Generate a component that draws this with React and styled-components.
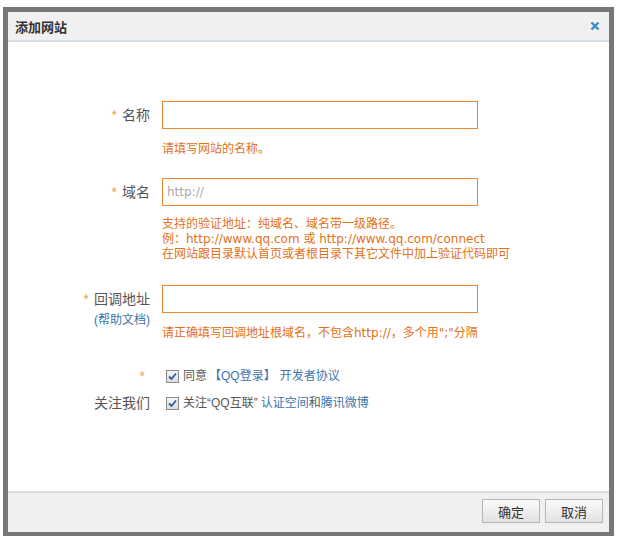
import styled, { createGlobalStyle } from "styled-components";

const GlobalStyle = createGlobalStyle`
  body {
    margin: 0;
    background: #fff;
    font-family: "Liberation Sans", "Noto Sans CJK SC", sans-serif;
  }
`;

const Dialog = styled.div`
  margin: 7px 0 0 3px;
  width: 611px;
  height: 530px;
  box-sizing: border-box;
  border: 5px solid #777;
  display: flex;
  flex-direction: column;
  background: #fff;
`;

const Header = styled.div`
  height: 28px;
  border-bottom: 2px solid #d6dee4;
  background: #f0f0f0;
  display: flex;
  align-items: center;
  justify-content: space-between;
  padding: 0 9px 0 7px;
`;

const Title = styled.span`
  font-size: 13px;
  font-weight: 700;
  color: #333;
`;

const Close = styled.button`
  border: 0;
  background: none;
  padding: 0;
  width: 10px;
  height: 10px;
  display: flex;
  cursor: pointer;
`;

const Body = styled.div`
  flex: 1;
  padding-top: 59px;
`;

const Row = styled.div`
  display: flex;
  align-items: flex-start;
  margin-top: ${(p) => p.$top || 0}px;
`;

const Label = styled.div`
  width: 142px;
  flex: none;
  text-align: right;
  font-size: 14px;
  line-height: ${(p) => p.$lh || 28}px;
  color: #555;
`;

const Star = styled.span`
  color: #f0a050;
  margin-right: 5px;
`;

const HelpLink = styled.a`
  display: block;
  font-size: 12px;
  line-height: 18px;
  color: #3b74ad;
  text-decoration: none;
  margin-top: -2px;
`;

const Control = styled.div`
  margin-left: 12px;
  display: flex;
  flex-direction: column;
`;

const Input = styled.input`
  width: 316px;
  height: 28px;
  box-sizing: border-box;
  border: 1px solid #e78a33;
  padding: 0 4px;
  font-family: "DejaVu Sans", "Noto Sans CJK SC", sans-serif;
  font-size: 12px;
  color: #333;
  outline: none;

  &::placeholder {
    color: #aaa;
  }
`;

const Hint = styled.div`
  margin-top: ${(p) => p.$top || 12}px;
  font-family: "DejaVu Sans", "Noto Sans CJK SC", sans-serif;
  font-size: 12px;
  line-height: 15px;
  color: #e3711a;
  white-space: nowrap;
`;

const CheckLine = styled.label`
  display: flex;
  align-items: center;
  padding-left: 4px;
  font-size: 12px;
  line-height: 18px;
  color: #555;
`;

const Box = styled.span`
  width: 11px;
  height: 11px;
  border: 1px solid #8a8a8a;
  background: linear-gradient(#f4f4f4, #dcdcdc);
  display: flex;
  align-items: center;
  justify-content: center;
  margin-right: 4px;
`;

const Link = styled.a`
  color: #3b74ad;
  text-decoration: none;
  margin: ${(p) => p.$m || 0};
`;

const Footer = styled.div`
  height: 41px;
  border-top: 2px solid #d6dee4;
  background: #f0f0f0;
  display: flex;
  justify-content: flex-end;
  align-items: flex-start;
  gap: 5px;
  padding: 6px 6px 0 0;
  box-sizing: border-box;
`;

const Button = styled.button`
  width: 58px;
  height: 24px;
  border: 1px solid #b5b5b5;
  background: linear-gradient(#fbfbfb, #e2e2e2);
  font-family: inherit;
  font-size: 13px;
  color: #333;
  padding: 0;
  cursor: pointer;
`;

const Check = () => (
  <Box>
    <svg width="9" height="9" viewBox="0 0 9 9">
      <path d="M1 4.5 L3.5 7 L8 1.5" fill="none" stroke="#2d5ca6" strokeWidth="1.8" />
    </svg>
  </Box>
);

export default function App() {
  return (
    <>
      <GlobalStyle />
      <Dialog>
        <Header>
          <Title>添加网站</Title>
          <Close aria-label="关闭">
            <svg width="10" height="10" viewBox="0 0 10 10">
              <path d="M1.5 1.5 L8.5 8.5 M8.5 1.5 L1.5 8.5" stroke="#3d8cc4" strokeWidth="2.4" />
            </svg>
          </Close>
        </Header>
        <Body>
          <Row>
            <Label>
              <Star>*</Star>名称
            </Label>
            <Control>
              <Input />
              <Hint $top={13}>请填写网站的名称。</Hint>
            </Control>
          </Row>
          <Row $top={21}>
            <Label>
              <Star>*</Star>域名
            </Label>
            <Control>
              <Input placeholder="http://" />
              <Hint $top={11}>
                支持的验证地址：纯域名、域名带一级路径。
                <br />
                例：http://www.qq.com 或 http://www.qq.com/connect
                <br />
                在网站跟目录默认首页或者根目录下其它文件中加上验证代码即可
              </Hint>
            </Control>
          </Row>
          <Row $top={23}>
            <Label>
              <Star>*</Star>回调地址
              <HelpLink href="#">(帮助文档)</HelpLink>
            </Label>
            <Control>
              <Input />
              <Hint $top={13}>请正确填写回调地址根域名，不包含http://，多个用";"分隔</Hint>
            </Control>
          </Row>
          <Row $top={26}>
            <Label $lh={18}>
              <Star>*</Star>
            </Label>
            <Control>
              <CheckLine>
                <Check />
                同意
                <Link href="#" $m="0 4px 0 2px">【QQ登录】</Link>
                <Link href="#">开发者协议</Link>
              </CheckLine>
            </Control>
          </Row>
          <Row $top={9}>
            <Label $lh={18}>关注我们</Label>
            <Control>
              <CheckLine>
                <Check />
                关注“QQ互联”
                <Link href="#" $m="0 0 0 3px">认证空间</Link>和
                <Link href="#">腾讯微博</Link>
              </CheckLine>
            </Control>
          </Row>
        </Body>
        <Footer>
          <Button>确定</Button>
          <Button>取消</Button>
        </Footer>
      </Dialog>
    </>
  );
}
